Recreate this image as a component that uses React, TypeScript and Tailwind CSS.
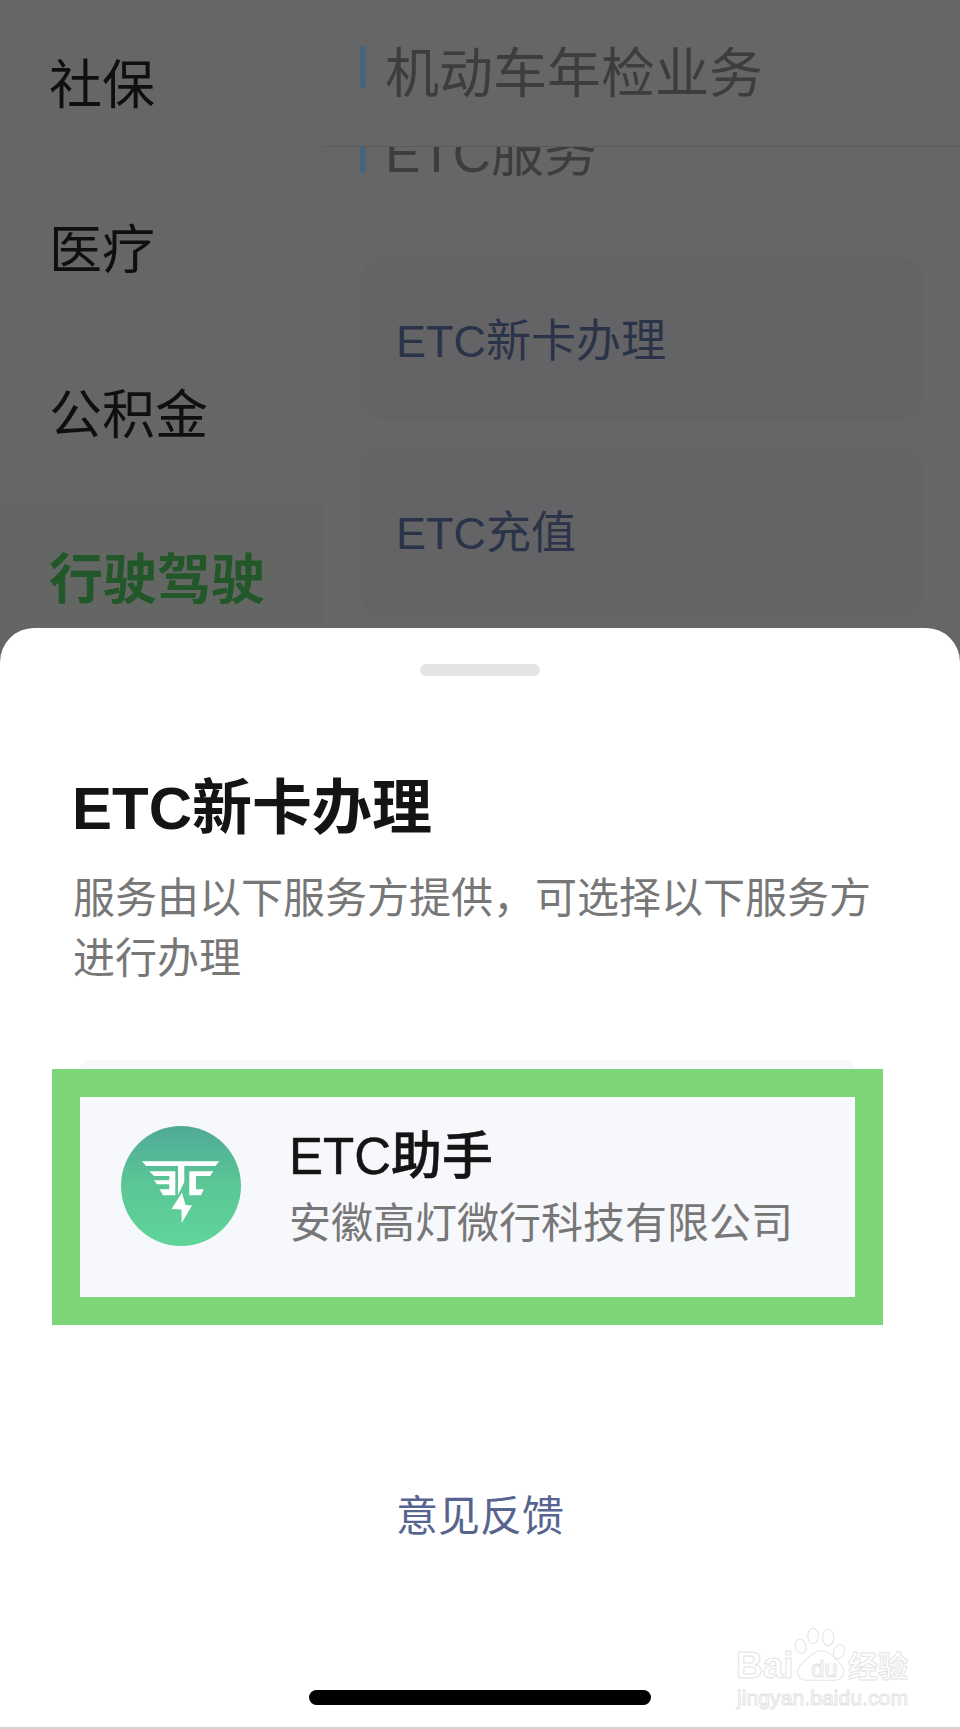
const font = 'font-["Liberation_Sans","Noto_Sans_CJK_SC",sans-serif]';

const menuItems = [
  { label: '社保', active: false },
  { label: '医疗', active: false },
  { label: '公积金', active: false },
  { label: '行驶驾驶', active: true },
];

function EtcLogo() {
  return (
    <div className="w-[120px] h-[120px] shrink-0 rounded-full bg-gradient-to-b from-[#4fa997] via-[#5bc795] to-[#60d59a] flex items-center justify-center">
      <svg viewBox="0 0 120 120" className="w-[120px] h-[120px]" fill="#fff">
        <path d="M21 35.3H98.3L94.3 40H25Z" />
        <path d="M28.3 45.3H54.3V69.3H42L38.5 63.3H48.3V58.3H36L33 54.3H48.3V50H33Z" />
        <path d="M57 40H63.3V56L57 69Z" />
        <path d="M68.3 45.3H92.3L89 50H75V63.3H82.7L80 69.3H68.3Z" />
        <path d="M61 66.5L50.5 83L60.5 83.5L60.7 97L71 79.5L64.5 79Z" />
      </svg>
    </div>
  );
}

function BaiduMark() {
  const outline = 'text-white [-webkit-text-stroke:1px_#e4e4e4]';
  return (
    <div className="absolute left-[736px] top-[1625px] w-[194px] h-[86px]">
      <svg viewBox="190 15 170 170" className="absolute left-[57px] top-0 w-[57px] h-[57px]" fill="#fff" stroke="#e4e4e4" strokeWidth="3">
        <ellipse cx="213" cy="78" rx="16" ry="21" transform="rotate(-20 213 78)" />
        <ellipse cx="250" cy="48" rx="16" ry="23" />
        <ellipse cx="295" cy="52" rx="17" ry="24" />
        <ellipse cx="327" cy="95" rx="16" ry="22" transform="rotate(20 327 95)" />
        <path d="M275 92C300 92 315 115 332 132C350 152 340 180 312 180H232C205 180 195 155 212 135C232 115 250 92 275 92Z" />
      </svg>
      <span className={`absolute left-0 top-[21px] text-[37px] leading-[40px] font-bold ${outline}`}>Bai</span>
      <span className={`absolute left-[75px] top-[30px] text-[24px] leading-[28px] ${outline}`}>du</span>
      <span className={`absolute left-[112px] top-[24px] text-[30px] leading-[36px] font-bold ${outline}`}>经验</span>
      <span className={`absolute left-[1px] top-[61px] text-[21px] leading-[24px] tracking-[0.1px] ${outline}`}>jingyan.baidu.com</span>
    </div>
  );
}

export default function App() {
  return (
    <div className={`relative w-[960px] h-[1729px] overflow-hidden bg-[#666666] ${font}`}>
      {/* dimmed page behind the sheet */}
      <div className="flex h-[628px]">
        <div className="w-[323px] shrink-0 flex flex-col pt-[3px] border-r border-[#616161]">
          {menuItems.map((item) => (
            <div
              key={item.label}
              className={
                item.active
                  ? 'mt-[4px] h-[160px] pb-[4px] shrink-0 pl-[49px] flex items-center text-[54px] bg-[#646664] text-[#215729] font-bold'
                  : 'h-[165px] shrink-0 pl-[49px] flex items-center text-[53px] text-[#0f0f0f]'
              }
            >
              {item.label}
            </div>
          ))}
        </div>
        <div className="flex-1 min-w-0 overflow-hidden">
          <div className="relative z-10 h-[147px] bg-[#666666] border-b border-[#5a5a5a] pl-[37px] pt-[46px] flex items-start gap-[19px]">
            <div className="w-[6px] h-[42px] rounded-[2px] bg-[#46647e]" />
            <div className="text-[54px] leading-[54px] mt-[1px] text-[#3d3d3d]">机动车年检业务</div>
          </div>
          <div className="pl-[37px] pr-[37px] -mt-[18px]">
            <div className="flex items-start gap-[19px] h-[48px]">
              <div className="w-[6px] h-[44px] rounded-[2px] bg-[#46647e]" />
              <div className="text-[53px] leading-[53px] -mt-[2px] text-[#3d3d3d]">ETC服务</div>
            </div>
            <div className="mt-[81px] h-[162px] rounded-[24px] bg-[#646466] pl-[36px] pt-[6px] flex items-center text-[45px] text-[#2b3349]">
              ETC新卡办理
            </div>
            <div className="mt-[27px] h-[170px] rounded-[24px] bg-[#646466] pl-[36px] pt-[4px] flex items-center text-[45px] text-[#2b3349]">
              ETC充值
            </div>
          </div>
        </div>
      </div>

      {/* bottom sheet */}
      <div className="absolute left-0 top-[628px] w-[960px] h-[1101px] bg-white rounded-t-[34px] flex flex-col">
        <div className="mt-[36px] mx-auto w-[120px] h-[12px] rounded-full bg-[#e4e4e4]" />
        <div className="mt-[98px] px-[72px] text-[60px] leading-[70px] font-bold text-[#141414]">ETC新卡办理</div>
        <div className="mt-[25px] px-[73px] text-[42px] leading-[60px] text-[#777777]">
          服务由以下服务方提供，可选择以下服务方
          <br />
          进行办理
        </div>
        {/* highlighted provider card */}
        <div className="relative mt-[80px] ml-[52px] w-[831px] h-[256px] border-[28px] border-[#7cd577] bg-[#f7f8fb] flex items-center pl-[41px] pb-[22px] gap-[48px]">
          <div className="absolute -top-[37px] left-0 w-[775px] h-[9px] rounded-t-[24px] bg-[#f7f8fb]" />
          <EtcLogo />
          <div className="flex flex-col gap-[6px] pt-[5px]">
            <div className="text-[51px] leading-[64px] font-medium text-[#141414] [-webkit-text-stroke:0.5px_#141414]">ETC助手</div>
            <div className="text-[42px] leading-[58px] text-[#777777]">安徽高灯微行科技有限公司</div>
          </div>
        </div>
        <div className="mt-[162px] text-center text-[42px] leading-[60px] text-[#56648f]">意见反馈</div>
        <div className="mt-[143px] mx-auto w-[342px] h-[15px] rounded-full bg-black" />
        <div className="mt-auto h-[2px] bg-[#d4d4d4]" />
      </div>

      <BaiduMark />
    </div>
  );
}
